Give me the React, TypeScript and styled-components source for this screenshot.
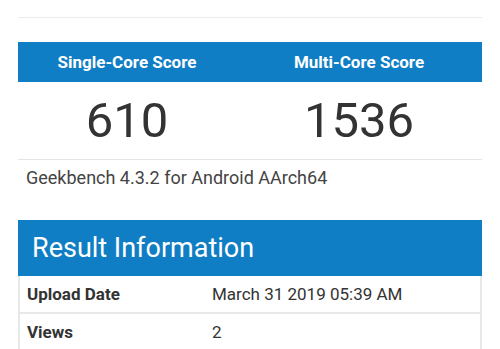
import React from "react";
import styled, { createGlobalStyle } from "styled-components";

const Global = createGlobalStyle`
  html, body { margin: 0; padding: 0; background: #fff; }
  body { font-family: Roboto, "Noto Sans", sans-serif; color: #333; }
`;

const Page = styled.div`
  padding: 17px 18px 0;
  display: flex;
  flex-direction: column;
  width: 464px;
`;

const Rule = styled.div`
  height: 1px;
  background: #ececec;
`;

const ScoreTable = styled.div`
  margin-top: 24px;
  display: grid;
  grid-template-columns: 1fr 1fr;
`;

const HeadCell = styled.div`
  background: #0f7ec4;
  height: 40px;
  display: flex;
  align-items: center;
  justify-content: center;
  padding-right: 14px;
  color: #fff;
  font-weight: 700;
  font-size: 17px;
`;

const ScoreCell = styled.div`
  height: 77px;
  display: flex;
  align-items: center;
  justify-content: center;
  padding-right: 14px;
  font-size: 49px;
  font-weight: 400;
  color: #333;
  border-bottom: 1px solid #e4e4e4;
`;

const Version = styled.div`
  padding: 7px 8px 0;
  height: 35px;
  font-size: 18px;
  color: #444;
`;

const InfoBox = styled.div`
  margin-top: 18px;
  display: flex;
  flex-direction: column;
`;

const InfoTitle = styled.div`
  background: #0f7ec4;
  color: #fff;
  height: 56px;
  display: flex;
  align-items: center;
  padding-left: 14px;
  font-size: 27px;
  font-weight: 400;
`;

const Row = styled.div`
  display: grid;
  grid-template-columns: 192px 1fr;
  height: 36px;
  align-items: center;
  border: 2px solid #e8e8e8;
  border-top: none;
  font-size: 17px;
`;

const Label = styled.div`
  padding-left: 7px;
  font-weight: 700;
  color: #333;
`;

const Value = styled.div`
  color: #333;
`;

export default function App() {
  return (
    <>
      <Global />
      <Page>
        <Rule />
        <ScoreTable>
          <HeadCell>Single-Core Score</HeadCell>
          <HeadCell>Multi-Core Score</HeadCell>
          <ScoreCell>610</ScoreCell>
          <ScoreCell>1536</ScoreCell>
        </ScoreTable>
        <Version>Geekbench 4.3.2 for Android AArch64</Version>
        <InfoBox>
          <InfoTitle>Result Information</InfoTitle>
          <Row>
            <Label>Upload Date</Label>
            <Value>March 31 2019 05:39 AM</Value>
          </Row>
          <Row>
            <Label>Views</Label>
            <Value>2</Value>
          </Row>
        </InfoBox>
      </Page>
    </>
  );
}
